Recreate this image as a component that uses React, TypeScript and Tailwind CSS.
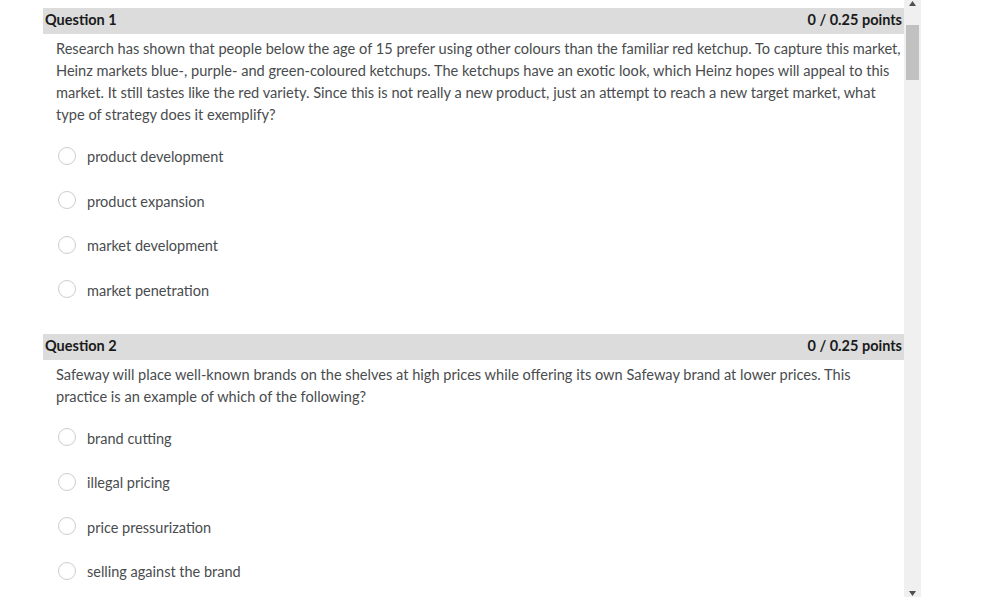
const questions = [
  {
    title: "Question 1",
    points: "0 / 0.25 points",
    text: "Research has shown that people below the age of 15 prefer using other colours than the familiar red ketchup. To capture this market, Heinz markets blue-, purple- and green-coloured ketchups. The ketchups have an exotic look, which Heinz hopes will appeal to this market. It still tastes like the red variety. Since this is not really a new product, just an attempt to reach a new target market, what type of strategy does it exemplify?",
    options: ["product development", "product expansion", "market development", "market penetration"],
  },
  {
    title: "Question 2",
    points: "0 / 0.25 points",
    text: "Safeway will place well-known brands on the shelves at high prices while offering its own Safeway brand at lower prices. This practice is an example of which of the following?",
    options: ["brand cutting", "illegal pricing", "price pressurization", "selling against the brand"],
  },
];

function Question({ q }: { q: (typeof questions)[number] }) {
  return (
    <div className="mb-[34px]">
      <div className="flex h-[26px] items-center justify-between bg-[#dcdcdc] pb-[2px] pl-[2px] pr-[2px] text-[14.5px] font-bold text-[#1a1a1a]">
        <span>{q.title}</span>
        <span>{q.points}</span>
      </div>
      <p className="pl-[13px] pr-[2px] pt-[4px] text-[14.6px] leading-[22px] text-[#494c4e]">{q.text}</p>
      <div className="mt-[22px] flex flex-col gap-[26.5px] pl-[15px]">
        {q.options.map((o) => (
          <label key={o} className="flex h-[18px] items-center gap-[11px] text-[14.5px] text-[#494c4e]">
            <span className="mb-[3px] h-[18px] w-[18px] shrink-0 rounded-full border border-[#cdcdcd] bg-white" />
            <span>{o}</span>
          </label>
        ))}
      </div>
    </div>
  );
}

export default function App() {
  return (
    <div
      className="flex h-[597px] w-[989px] overflow-hidden bg-white"
      style={{ fontFamily: "Lato, 'Noto Sans', sans-serif" }}
    >
      <div className="w-[904px] shrink-0 pl-[43px] pt-[8px]">
        {questions.map((q) => (
          <Question key={q.title} q={q} />
        ))}
      </div>
      <div className="flex h-full w-[17px] shrink-0 flex-col items-center bg-[#f0f0f0]">
        <svg width="7" height="5" viewBox="0 0 7 5" className="mt-[1px]">
          <path d="M0 5 L3.5 0 L7 5 Z" fill="#505050" />
        </svg>
        <div className="mt-[19px] h-[55px] w-[13px] bg-[#c1c1c1]" />
        <div className="flex-1" />
        <svg width="7" height="5" viewBox="0 0 7 5" className="mb-[1px]">
          <path d="M0 0 L3.5 5 L7 0 Z" fill="#505050" />
        </svg>
      </div>
      <div className="flex-1 bg-white" />
    </div>
  );
}
